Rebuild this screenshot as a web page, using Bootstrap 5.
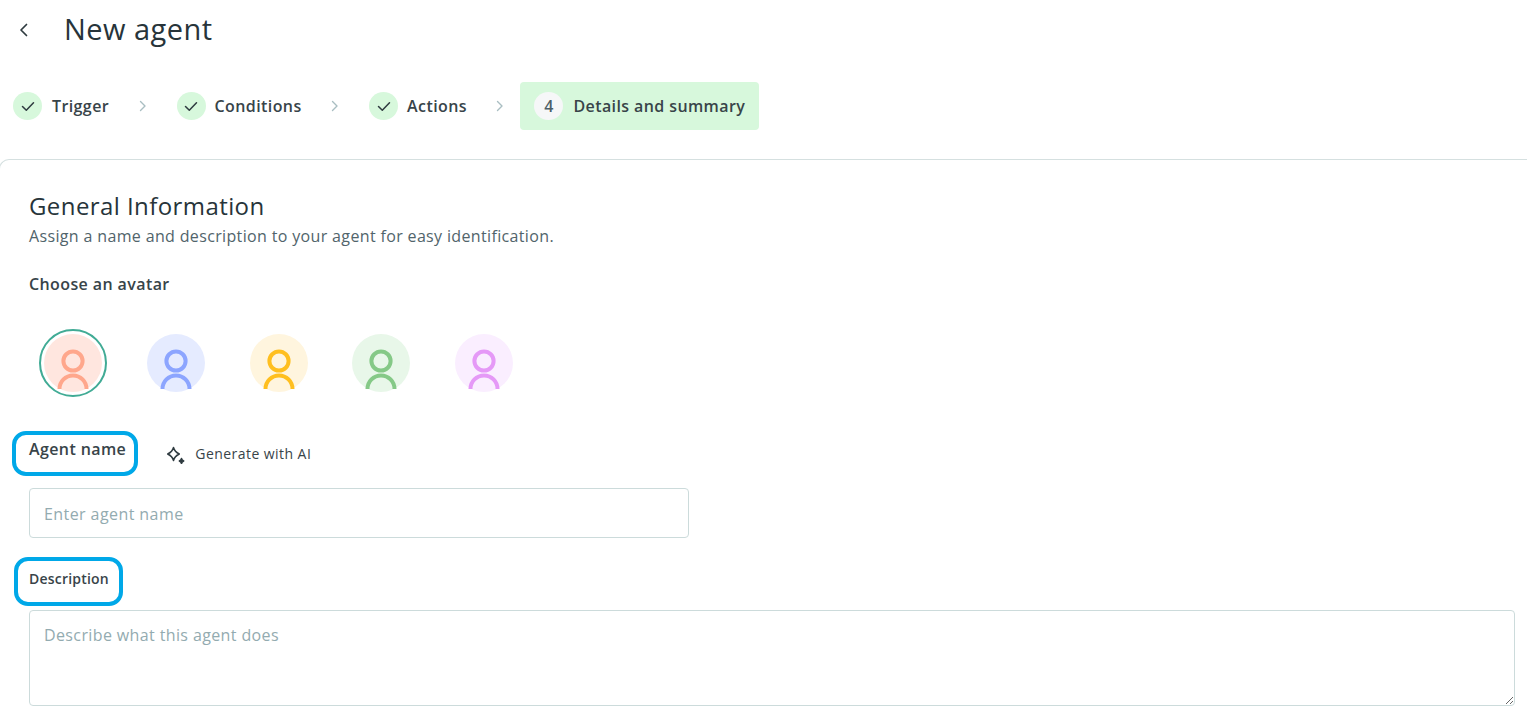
<!DOCTYPE html>
<html lang="en">
<head>
  <meta charset="UTF-8"/>
  <meta name="viewport" content="width=device-width, initial-scale=1"/>
  <title>New agent</title>
  <link href="https://cdn.jsdelivr.net/npm/bootstrap@5.3.0/dist/css/bootstrap.min.css" rel="stylesheet"/>
  <style>
    html, body { height: 712px; overflow: hidden; }
    body { font-family: "Open Sans", sans-serif; color: #2f3b40; background: #fff; letter-spacing: .4px; }
    .page-head { height: 59px; padding-left: 19px; }
    .page-head h1 { font-size: 29px; font-weight: 500; margin: 0 0 0 36px; color: #27343a; letter-spacing: .45px; }
    .stepper { margin-top: 23px; height: 48px; padding-left: 13px; }
    .step-item { font-size: 16px; font-weight: 600; color: #384449; }
    .step-dot { width: 29px; height: 28px; border-radius: 50%; background: #d7f8dc; margin-right: 9px; flex: none; }
    .step-first .step-dot, .step-current .step-dot { margin-right: 10px; }
    .step-sep { margin: 0 30px 0 29.5px; width: 8px; flex: none; }
    .step-sep.before-current { margin-right: 16px; }
    .step-current { background: #d7f8dc; height: 48px; border-radius: 4px; padding: 0 14px; }
    .step-current .step-dot { background: #f6f7f8; color: #4d5f67; }
    .form-panel { margin: 29px 0 0 -1px; border: 1px solid #d5e0e0; border-right: 0; border-bottom: 0; border-top-left-radius: 10px; padding: 29px 12px 0 29px; }
    .form-panel h2 { font-size: 24px; font-weight: 500; margin: 0; line-height: 33px; letter-spacing: .42px; color: #27343a; }
    .sub-text { font-size: 16px; color: #51646b; line-height: 22px; margin: 3px 0 0; letter-spacing: .35px; }
    .avatar-title { font-size: 16px; font-weight: 600; margin-top: 25px; line-height: 24px; color: #384449; }
    .avatar-row { margin-top: 33px; height: 68px; padding-left: 10px; }
    .avatar-btn { width: 68px; height: 68px; border-radius: 50%; border: 2px solid transparent; padding: 3px; flex: none; margin-right: 34.75px; }
    .avatar-btn.is-picked { border-color: #41ab95; }
    .avatar-btn svg { display: block; width: 58px; height: 58px; }
    .field-title { font-weight: 600; color: #384449; position: relative; display: inline-block; }
    .field-title::after { content: ""; position: absolute; border: 4px solid #00a8e8; border-radius: 14px; pointer-events: none; }
    .name-title { font-size: 16px; line-height: 22px; }
    .name-title::after { left: -17px; right: -12px; top: -7px; bottom: -16px; }
    .desc-title { font-size: 14px; line-height: 20px; letter-spacing: .2px; }
    .desc-title::after { left: -15px; right: -14px; top: -12px; bottom: -17px; }
    .name-row { margin-top: 41px; height: 42px; }
    .ai-link { font-size: 14px; font-weight: 500; color: #384449; margin-left: 40px; padding-top: 5px; letter-spacing: .45px; }
    .ai-link svg { margin-right: 9px; }
    .form-control.agent-input { width: 660px; height: 50px; margin-top: 8px; border: 1px solid #ccdbdb; border-radius: 4px; padding: 1px 14px 0; font-size: 16px; color: #2f3b40; letter-spacing: .42px; }
    .form-control.agent-text { height: 96px; margin-top: 24px; border: 1px solid #ccdbdb; border-radius: 4px; padding: 12px 14px; font-size: 16px; color: #2f3b40; letter-spacing: .38px; }
    .form-control::placeholder { color: #93abb0; }
    .desc-row { margin-top: 28px; height: 20px; }
  </style>
</head>
<body>
  <div class="page-head d-flex align-items-center">
    <svg width="9" height="14" viewBox="0 0 9 14" fill="none" stroke="#2f3b40" stroke-width="1.7" stroke-linecap="round" stroke-linejoin="round"><path d="M7.5 1.5 2 7l5.500 5.500"/></svg>
    <h1>New agent</h1>
  </div>

  <!-- Steps -->
  <div class="stepper d-flex align-items-center">
    <div class="step-item step-first d-flex align-items-center">
      <span class="step-dot d-flex align-items-center justify-content-center"><svg width="14" height="11" viewBox="0 0 14 11" fill="none" stroke="#2f3b40" stroke-width="1.5" stroke-linecap="round" stroke-linejoin="round"><path d="M1.500 5.500 5.300 9.300 12.500 1.700"/></svg></span>Trigger
    </div>
    <svg class="step-sep" width="8" height="12" viewBox="0 0 8 12" fill="none" stroke="#a9bec2" stroke-width="1.4" stroke-linecap="round" stroke-linejoin="round"><path d="M1.500 1.500 6 6l-4.500 4.500"/></svg>
    <div class="step-item d-flex align-items-center">
      <span class="step-dot d-flex align-items-center justify-content-center"><svg width="14" height="11" viewBox="0 0 14 11" fill="none" stroke="#2f3b40" stroke-width="1.5" stroke-linecap="round" stroke-linejoin="round"><path d="M1.500 5.500 5.300 9.300 12.500 1.700"/></svg></span>Conditions
    </div>
    <svg class="step-sep" width="8" height="12" viewBox="0 0 8 12" fill="none" stroke="#a9bec2" stroke-width="1.4" stroke-linecap="round" stroke-linejoin="round"><path d="M1.500 1.500 6 6l-4.500 4.500"/></svg>
    <div class="step-item d-flex align-items-center">
      <span class="step-dot d-flex align-items-center justify-content-center"><svg width="14" height="11" viewBox="0 0 14 11" fill="none" stroke="#2f3b40" stroke-width="1.5" stroke-linecap="round" stroke-linejoin="round"><path d="M1.500 5.500 5.300 9.300 12.500 1.700"/></svg></span>Actions
    </div>
    <svg class="step-sep before-current" width="8" height="12" viewBox="0 0 8 12" fill="none" stroke="#a9bec2" stroke-width="1.4" stroke-linecap="round" stroke-linejoin="round"><path d="M1.500 1.500 6 6l-4.500 4.500"/></svg>
    <div class="step-item step-current d-flex align-items-center">
      <span class="step-dot d-flex align-items-center justify-content-center">4</span>Details and summary
    </div>
  </div>

  <div class="form-panel">
    <h2>General Information</h2>
    <p class="sub-text">Assign a name and description to your agent for easy identification.</p>
    <div class="avatar-title">Choose an avatar</div>

    <div class="avatar-row d-flex align-items-center">
      <div class="avatar-btn is-picked"><svg viewBox="0 0 58 58"><circle cx="29" cy="29" r="29" fill="#ffe6df"/><circle cx="29" cy="27" r="9.600" fill="none" stroke="#ffa78c" stroke-width="4"/><path d="M15.500 55a13.500 13.500 0 0 1 27 0" fill="none" stroke="#ffa78c" stroke-width="4"/></svg></div>
      <div class="avatar-btn"><svg viewBox="0 0 58 58"><circle cx="29" cy="29" r="29" fill="#e5ebff"/><circle cx="29" cy="27" r="9.600" fill="none" stroke="#8ca5ff" stroke-width="4"/><path d="M15.500 55a13.500 13.500 0 0 1 27 0" fill="none" stroke="#8ca5ff" stroke-width="4"/></svg></div>
      <div class="avatar-btn"><svg viewBox="0 0 58 58"><circle cx="29" cy="29" r="29" fill="#fff5de"/><circle cx="29" cy="27" r="9.600" fill="none" stroke="#ffbf1f" stroke-width="4"/><path d="M15.500 55a13.500 13.500 0 0 1 27 0" fill="none" stroke="#ffbf1f" stroke-width="4"/></svg></div>
      <div class="avatar-btn"><svg viewBox="0 0 58 58"><circle cx="29" cy="29" r="29" fill="#e8f7e9"/><circle cx="29" cy="27" r="9.600" fill="none" stroke="#85c987" stroke-width="4"/><path d="M15.500 55a13.500 13.500 0 0 1 27 0" fill="none" stroke="#85c987" stroke-width="4"/></svg></div>
      <div class="avatar-btn"><svg viewBox="0 0 58 58"><circle cx="29" cy="29" r="29" fill="#faeeff"/><circle cx="29" cy="27" r="9.600" fill="none" stroke="#e599f7" stroke-width="4"/><path d="M15.500 55a13.500 13.500 0 0 1 27 0" fill="none" stroke="#e599f7" stroke-width="4"/></svg></div>
    </div>

    <div class="name-row d-flex align-items-start">
      <label class="field-title name-title">Agent name</label>
      <div class="ai-link d-flex align-items-center">
        <svg width="20" height="20" viewBox="0 0 20 20" fill="none" stroke="#2f3b40" stroke-width="1.500" stroke-linejoin="round"><path d="M7.500 3.500c.9 3.500 2.100 4.700 5.800 6.500-3.700 1.800-4.900 3-5.800 6.500C6.600 13 5.400 11.800 1.700 10c3.700-1.800 4.900-3 5.800-6.500z"/><path d="M15.500 14.500c.3 1.300.8 1.900 2.200 2.500-1.400.6-1.900 1.200-2.200 2.500-.3-1.300-.8-1.900-2.200-2.500 1.400-.6 1.900-1.200 2.200-2.500z" fill="#2f3b40"/></svg>
        Generate with AI
      </div>
    </div>
    <input class="form-control agent-input" type="text" placeholder="Enter agent name"/>

    <div class="desc-row"><label class="field-title desc-title">Description</label></div>
    <textarea class="form-control agent-text" placeholder="Describe what this agent does"></textarea>
  </div>

  <script src="https://cdn.jsdelivr.net/npm/bootstrap@5.3.0/dist/js/bootstrap.bundle.min.js"></script>
</body>
</html>
